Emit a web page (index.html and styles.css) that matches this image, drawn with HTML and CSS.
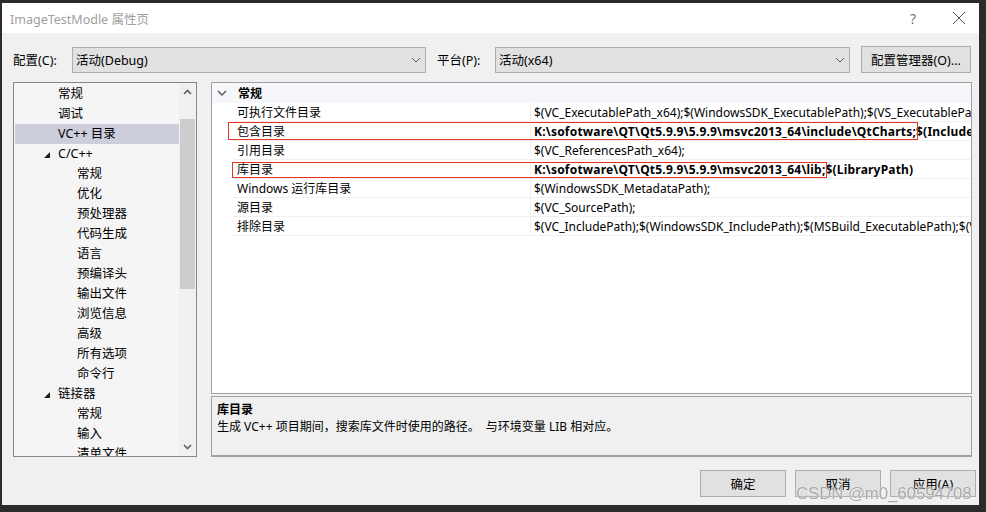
FILE: index.html
```html
<!DOCTYPE html>
<html lang="zh-CN">
<head>
  <meta charset="UTF-8" />
  <title>ImageTestModle 属性页</title>
  <link rel="stylesheet" href="styles.css">
</head>
<body>

<div class="window">
  <!-- title bar -->
  <div class="titlebar">
    <span class="title">ImageTestModle 属性页</span>
    <span class="help">?</span>
    <svg class="close" width="14" height="14" viewBox="0 0 14 14">
      <path d="M1 1 L13 13 M13 1 L1 13" stroke="#555" stroke-width="1" fill="none"/>
    </svg>
  </div>

  <div class="client">
    <!-- config / platform -->
    <div class="toolbar">
      <span class="lbl">配置(C):</span>
      <div class="select cfg">
        <span>活动(Debug)</span>
        <svg width="10" height="6" viewBox="0 0 10 6"><path d="M1 1 L5 5 L9 1" stroke="#555" fill="none"/></svg>
      </div>
      <span class="lbl plat-lbl">平台(P):</span>
      <div class="select plat">
        <span>活动(x64)</span>
        <svg width="10" height="6" viewBox="0 0 10 6"><path d="M1 1 L5 5 L9 1" stroke="#555" fill="none"/></svg>
      </div>
      <button class="btn mgr">配置管理器(O)...</button>
    </div>

    <div class="panes">
      <!-- left tree -->
      <div class="tree">
        <ul class="tree-list">
          <li class="l1">常规</li>
          <li class="l1">调试</li>
          <li class="l1 sel">VC++ 目录</li>
          <li class="l1 open"><i class="tri"></i>C/C++</li>
          <li class="l2">常规</li>
          <li class="l2">优化</li>
          <li class="l2">预处理器</li>
          <li class="l2">代码生成</li>
          <li class="l2">语言</li>
          <li class="l2">预编译头</li>
          <li class="l2">输出文件</li>
          <li class="l2">浏览信息</li>
          <li class="l2">高级</li>
          <li class="l2">所有选项</li>
          <li class="l2">命令行</li>
          <li class="l1 open"><i class="tri"></i>链接器</li>
          <li class="l2">常规</li>
          <li class="l2">输入</li>
          <li class="l2">清单文件</li>
        </ul>
        <div class="vscroll">
          <svg class="arr" width="9" height="6" viewBox="0 0 9 6"><path d="M1 5 L4.5 1.5 L8 5" stroke="#606060" stroke-width="1.6" fill="none"/></svg>
          <div class="track"><div class="thumb"></div></div>
          <svg class="arr" width="9" height="6" viewBox="0 0 9 6"><path d="M1 1 L4.5 4.5 L8 1" stroke="#606060" stroke-width="1.6" fill="none"/></svg>
        </div>
      </div>

      <div class="right">
        <!-- property grid -->
        <div class="grid">
          <div class="grow head">
            <svg class="chev" width="10" height="6" viewBox="0 0 10 6"><path d="M1 1 L5 5 L9 1" stroke="#555" stroke-width="1.4" fill="none"/></svg>
            <span>常规</span>
          </div>
          <div class="grow"><span class="name">可执行文件目录</span><span class="val">$(VC_ExecutablePath_x64);$(WindowsSDK_ExecutablePath);$(VS_ExecutablePath);$(MSBuild_ExecutablePath)</span></div>
          <div class="grow"><span class="name">包含目录</span><span class="val b">K:\sofotware\QT\Qt5.9.9\5.9.9\msvc2013_64\include\QtCharts;$(IncludePath)</span></div>
          <div class="grow"><span class="name">引用目录</span><span class="val">$(VC_ReferencesPath_x64);</span></div>
          <div class="grow"><span class="name">库目录</span><span class="val b">K:\sofotware\QT\Qt5.9.9\5.9.9\msvc2013_64\lib;$(LibraryPath)</span></div>
          <div class="grow"><span class="name">Windows 运行库目录</span><span class="val">$(WindowsSDK_MetadataPath);</span></div>
          <div class="grow"><span class="name">源目录</span><span class="val">$(VC_SourcePath);</span></div>
          <div class="grow"><span class="name">排除目录</span><span class="val">$(VC_IncludePath);$(WindowsSDK_IncludePath);$(MSBuild_ExecutablePath);$(VC_LibraryPath_x64)</span></div>

          <!-- annotation boxes -->
          <div class="mark mark-inc"></div>
          <div class="mark mark-lib"></div>
        </div>

        <div class="desc">
          <div class="desc-title">库目录</div>
          <div class="desc-text">生成 VC++ 项目期间，搜索库文件时使用的路径。&nbsp;&nbsp;与环境变量 LIB 相对应。</div>
        </div>
      </div>
    </div>

    <div class="footer">
      <button class="btn act">确定</button>
      <button class="btn act">取消</button>
      <button class="btn act">应用(A)</button>
    </div>
  </div>

  <div class="watermark">CSDN @m0_60594708</div>
</div>

</body>
</html>
```

FILE: styles.css
```css
:root {
  --ui-font: "Noto Sans", "Noto Sans CJK SC", sans-serif;
  --face: #f0f0f0;
  --ctl: #e1e1e1;
  --ctl-border: #adadad;
}

* {
  margin: 0;
  padding: 0;
  box-sizing: border-box;
}

body {
  background-color: #2b2b2b;
  font-family: var(--ui-font);
  font-size: 12px;
  color: #000;
  overflow: hidden;
}

.window {
  position: relative;
  width: 977px;
  height: 502px;
  margin: 3px 0 0 2px;
  background-color: var(--face);
  display: flex;
  flex-direction: column;
}

/* Title bar */
.titlebar {
  height: 30px;
  background-color: #fff;
  display: flex;
  align-items: center;
  padding-left: 8px;
}

.title {
  font-size: 12.5px;
  color: #a0a0a0;
  flex: 1;
}

.help {
  font-size: 14px;
  color: #777;
  margin-right: 36px;
}

.close {
  margin-right: 13px;
}

/* Client area */
.client {
  flex: 1;
  display: flex;
  flex-direction: column;
  padding: 13px 3px 0 11px;
}

.toolbar {
  display: flex;
  align-items: center;
  height: 27px;
}

.lbl {
  width: 59px;
  font-size: 12.5px;
}

.plat-lbl {
  margin-left: 11px;
  width: 58px;
}

.select {
  height: 26px;
  background-color: var(--ctl);
  border: 1px solid var(--ctl-border);
  display: flex;
  align-items: center;
  justify-content: space-between;
  padding: 0 4px 0 3px;
  font-size: 12.5px;
}

.cfg { width: 354px; }
.plat { width: 355px; }

.btn {
  font-family: var(--ui-font);
  font-size: 12.5px;
  background-color: var(--ctl);
  border: 1px solid var(--ctl-border);
  color: #000;
  height: 27px;
}

.mgr {
  width: 110px;
  margin-left: 11px;
}

/* Panes */
.panes {
  display: flex;
  margin-top: 9px;
  height: 375px;
}

.tree {
  width: 184px;
  border: 1px solid #828790;
  background-color: #f5f5f5;
  display: flex;
  overflow: hidden;
}

.tree-list {
  list-style: none;
  flex: 1;
  padding: 1px 0 0 1px;
}

.tree-list li {
  height: 20px;
  line-height: 20px;
  font-size: 12.5px;
  white-space: nowrap;
  display: flex;
  align-items: center;
}

.tree-list .l1 { padding-left: 43px; }
.tree-list .l2 { padding-left: 62px; }
.tree-list .open { padding-left: 29px; }

.tree-list .sel {
  background-color: #cccedb;
}

.tri {
  width: 0;
  height: 0;
  border-left: 6px solid transparent;
  border-bottom: 6px solid #1e1e1e;
  margin-right: 8px;
  margin-top: 1px;
}

.vscroll {
  width: 17px;
  flex-shrink: 0;
  background-color: #f0f0f0;
  display: flex;
  flex-direction: column;
  align-items: center;
}

.arr {
  margin: 6px 0;
}

.track {
  flex: 1;
  width: 100%;
  padding: 18px 1px 0;
}

.thumb {
  height: 170px;
  background-color: #cdcdcd;
}

.right {
  margin-left: 14px;
  width: 761px;
  display: flex;
  flex-direction: column;
}

/* Property grid */
.grid {
  position: relative;
  height: 313px;
  background-color: #fff;
  border: 1px solid #a0a0a0;
  overflow: hidden;
}

.grow {
  display: flex;
  height: 19px;
  align-items: center;
  white-space: nowrap;
  margin-left: 21px;
  border-bottom: 1px solid #f0f0f0;
}

.grow.head {
  margin-left: 0;
  height: 20px;
  background-color: #f5f7fa;
  border-bottom: none;
  font-weight: bold;
}

.chev {
  margin: 0 11px 0 5px;
}

.name {
  flex-shrink: 0;
  width: 298px;
  padding-left: 4px;
  border-right: 1px solid #f0f0f0;
  height: 100%;
  display: flex;
  align-items: center;
}

.val {
  flex-shrink: 0;
  padding-left: 3px;
}

.val.b {
  font-weight: bold;
  letter-spacing: 0.2px;
}

.mark {
  position: absolute;
  border: 1px solid #e8341c;
}

.mark-inc {
  left: 16px;
  top: 39px;
  width: 690px;
  height: 18px;
}

.mark-lib {
  left: 20px;
  top: 79px;
  width: 595px;
  height: 16px;
}

/* Description */
.desc {
  margin-top: 2px;
  height: 61px;
  border: 1px solid #a0a0a0;
  border-bottom-width: 2px;
  padding: 4px 5px;
}

.desc-title {
  font-weight: bold;
  line-height: 17px;
}

.desc-text {
  line-height: 17px;
}

/* Footer */
.footer {
  display: flex;
  justify-content: flex-end;
  gap: 9px;
  margin-top: 13px;
}

.act {
  width: 86px;
}

.watermark {
  position: absolute;
  left: 794px;
  top: 481px;
  white-space: nowrap;
  font-family: "Liberation Sans", sans-serif;
  font-size: 16.7px;
  color: rgba(90, 90, 90, 0.55);
  text-shadow: 0 0 1px #fff, 0 0 1px #fff;
  pointer-events: none;
}
```
